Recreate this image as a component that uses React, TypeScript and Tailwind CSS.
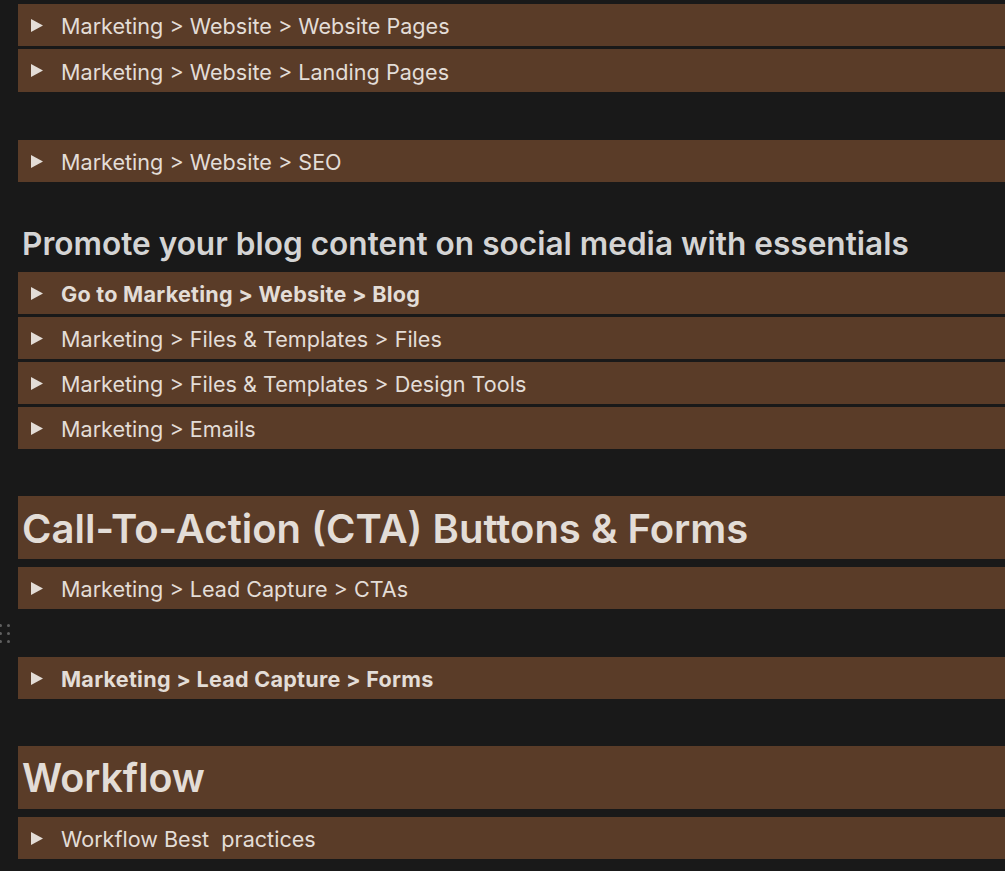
const font = { fontFamily: "Inter, 'Noto Sans', sans-serif" };

function Triangle() {
  return (
    <svg width="12" height="13" viewBox="0 0 12 13" className="shrink-0">
      <polygon points="0,0 12,6.5 0,13" fill="#e3ddd7" />
    </svg>
  );
}

function Toggle({
  label,
  bold = false,
  className = "",
}: {
  label: string;
  bold?: boolean;
  className?: string;
}) {
  return (
    <div
      className={`flex h-[42px] items-center bg-[#5a3c28] pl-[13px] text-[21.6px] text-[#e3ddd7] ${
        bold ? "font-bold tracking-[0.25px]" : "font-normal"
      } ${className}`}
    >
      <Triangle />
      <span className="ml-[18px] pt-[3px] whitespace-pre">{label}</span>
    </div>
  );
}

export default function App() {
  return (
    <div
      className="relative h-[871px] w-[1005px] overflow-hidden bg-[#191919]"
      style={font}
    >
      <div className="flex flex-col pl-[18px] pt-[4px]">
        <Toggle label="Marketing > Website > Website Pages" />
        <Toggle label="Marketing > Website > Landing Pages" className="mt-[3px] h-[43px]" />
        <Toggle label="Marketing > Website > SEO" className="mt-[48px]" />

        <h2 className="mt-[40px] h-[46px] pl-[4px] text-[31.6px] leading-[44px] font-semibold whitespace-nowrap text-[#d4d4d4]">
          Promote your blog content on social media with essentials
        </h2>
        <Toggle label="Go to Marketing > Website > Blog" bold className="mt-[4px]" />
        <Toggle label="Marketing > Files & Templates > Files" className="mt-[3px]" />
        <Toggle label="Marketing > Files & Templates > Design Tools" className="mt-[3px]" />
        <Toggle label="Marketing > Emails" className="mt-[3px]" />

        <h1 className="mt-[47px] flex h-[63px] items-center bg-[#5a3c28] pl-[4px] pt-[2px] text-[40px] font-semibold whitespace-nowrap text-[#e3ddd7]">
          Call-To-Action (CTA) Buttons &amp; Forms
        </h1>
        <Toggle label="Marketing > Lead Capture > CTAs" className="mt-[8px]" />
        <Toggle label="Marketing > Lead Capture > Forms" bold className="mt-[48px]" />

        <h1 className="mt-[47px] flex h-[63px] items-center bg-[#5a3c28] pl-[4px] pt-[2px] text-[39.4px] font-semibold whitespace-nowrap text-[#e3ddd7]">
          Workflow
        </h1>
        <Toggle label="Workflow Best  practices" className="mt-[8px]" />
      </div>

      <div className="absolute top-[624px] left-[-1px] grid grid-cols-2 gap-x-[5px] gap-y-[5px]">
        {Array.from({ length: 6 }).map((_, i) => (
          <span key={i} className="block h-[3px] w-[3px] rounded-full bg-[#5f5f5f]" />
        ))}
      </div>
    </div>
  );
}
